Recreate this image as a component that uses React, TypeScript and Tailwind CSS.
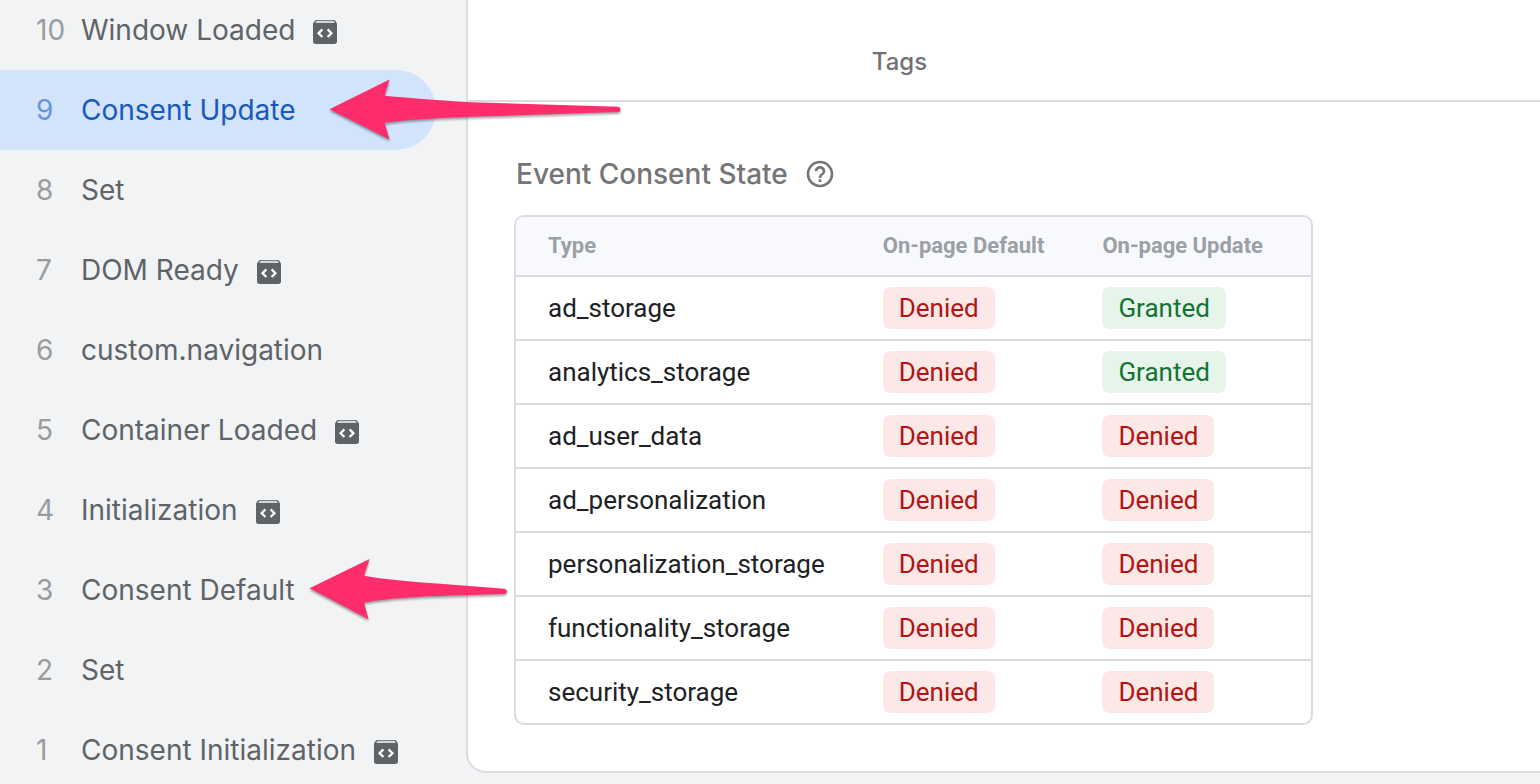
import React from "react";
import { MdHelpOutline } from "react-icons/md";

type EventItem = {
  id: number;
  label: string;
  hasCode?: boolean;
  selected?: boolean;
  arrow?: "update" | "default";
};

const events: EventItem[] = [
  { id: 10, label: "Window Loaded", hasCode: true },
  { id: 9, label: "Consent Update", selected: true, arrow: "update" },
  { id: 8, label: "Set" },
  { id: 7, label: "DOM Ready", hasCode: true },
  { id: 6, label: "custom.navigation" },
  { id: 5, label: "Container Loaded", hasCode: true },
  { id: 4, label: "Initialization", hasCode: true },
  { id: 3, label: "Consent Default", arrow: "default" },
  { id: 2, label: "Set" },
  { id: 1, label: "Consent Initialization", hasCode: true },
];

type Status = "Denied" | "Granted";

const consents: { type: string; initial: Status; update: Status }[] = [
  { type: "ad_storage", initial: "Denied", update: "Granted" },
  { type: "analytics_storage", initial: "Denied", update: "Granted" },
  { type: "ad_user_data", initial: "Denied", update: "Denied" },
  { type: "ad_personalization", initial: "Denied", update: "Denied" },
  { type: "personalization_storage", initial: "Denied", update: "Denied" },
  { type: "functionality_storage", initial: "Denied", update: "Denied" },
  { type: "security_storage", initial: "Denied", update: "Denied" },
];

function CodeBoxIcon() {
  return (
    <svg className="mt-1 h-6 w-6 shrink-0" viewBox="0 0 24 24" aria-hidden="true">
      <path
        d="M3.4 0h17.2q1 0 1.6.8L23.4 2.4Q24 3.2 24 4.2V21.3A2.7 2.7 0 0 1 21.3 24H2.7A2.7 2.7 0 0 1 0 21.3V4.2Q0 3.2.6 2.4L1.8.8Q2.4 0 3.4 0z"
        fill="#5f6368"
      />
      <path d="M3.6.8h16.8l1.5 2.2H2.1z" fill="#d3d6d8" />
      <path
        d="M9.4 9.4 5.6 13.2l3.8 3.8M14.6 9.4l3.8 3.8-3.8 3.8"
        fill="none"
        stroke="#fff"
        strokeWidth="2.3"
      />
    </svg>
  );
}

function Arrow({ kind }: { kind: "update" | "default" }) {
  if (kind === "update") {
    return (
      <svg
        className="pointer-events-none absolute top-0 left-80 h-20 w-80 drop-shadow-[0_2px_1px_rgba(0,0,0,0.35)]"
        viewBox="0 0 320 80"
        aria-hidden="true"
      >
        <path
          d="M9.5 39.2 69.5 9.5 64.7 25.7C90 28 125 31 160 32.5L298 36.8Q300.5 37 300.5 39.5T298 42L160 46.5C125 47.6 92 49 64.7 52.8L69.5 69.5Z"
          fill="#ff2d6c"
        />
      </svg>
    );
  }
  return (
    <svg
      className="pointer-events-none absolute top-0 left-75 h-20 w-55 drop-shadow-[0_2px_1px_rgba(0,0,0,0.35)]"
      viewBox="0 0 220 80"
      aria-hidden="true"
    >
      <path
        d="M9.5 38.2 69.5 9 64.2 25.7C82 29.2 112 31.8 140 33.7L204.5 38.8Q207 39.2 207 41.5T204.5 44L150 45.6C122 46.6 88 48 64.2 52.7L68.5 69.2Z"
        fill="#ff2d6c"
      />
    </svg>
  );
}

function Badge({ status }: { status: Status }) {
  return (
    <span
      className={
        status === "Granted"
          ? "block w-fit rounded-lg bg-[#e6f4ea] px-4 text-[26px] leading-[42px] text-[#137333]"
          : "block w-fit rounded-lg bg-[#fce8e6] px-4 text-[26px] leading-[42px] text-[#b31412]"
      }
    >
      {status}
    </span>
  );
}

function Sidebar() {
  return (
    <nav
      aria-label="Events"
      className="relative z-10 w-[466px] shrink-0 font-['Inter','Noto_Sans',sans-serif] text-[28px]"
    >
      <ul className="-mt-2.5">
        {events.map((e) => (
          <li key={e.id} className="relative pr-[30px]">
            <button
              type="button"
              aria-current={e.selected ? "true" : undefined}
              className={
                e.selected
                  ? "flex h-20 w-full items-center rounded-r-full bg-[#d2e3fc] pl-9 text-left whitespace-nowrap text-[#185abc]"
                  : "flex h-20 w-full items-center pl-9 text-left whitespace-nowrap text-[#5f6368]"
              }
            >
              <span
                className={
                  e.selected
                    ? "w-[45px] shrink-0 text-[#6b94d6]"
                    : "w-[45px] shrink-0 text-[#999c9f]"
                }
              >
                {e.id}
              </span>
              <span className="mr-[18px]">{e.label}</span>
              {e.hasCode && <CodeBoxIcon />}
            </button>
            {e.arrow && <Arrow kind={e.arrow} />}
          </li>
        ))}
      </ul>
    </nav>
  );
}

function ConsentTable() {
  return (
    <div className="w-fit overflow-hidden rounded-[10px] border-2 border-[#dadce0]">
      <table className="border-separate border-spacing-0 text-left whitespace-nowrap">
        <thead>
          <tr className="h-[60px] bg-[#f8f9fc] text-[22px] leading-8 text-[#9aa0a6] [&>th]:border-b-2 [&>th]:border-[#dadce0] [&>th]:font-bold">
            <th scope="col" className="pr-[58px] pl-8">
              Type
            </th>
            <th scope="col" className="pr-[58px]">
              On-page Default
            </th>
            <th scope="col" className="pr-12">
              On-page Update
            </th>
          </tr>
        </thead>
        <tbody className="[&>tr:not(:last-child)>td]:border-b-2 [&>tr:not(:last-child)>td]:border-[#dadce0]">
          {consents.map((c) => (
            <tr key={c.type} className="text-[26px] text-[#202124]">
              <td className="py-2.5 pr-[58px] pl-8">{c.type}</td>
              <td className="py-2.5">
                <Badge status={c.initial} />
              </td>
              <td className="py-2.5">
                <Badge status={c.update} />
              </td>
            </tr>
          ))}
        </tbody>
      </table>
    </div>
  );
}

export default function App() {
  return (
    <div className="flex h-screen items-start overflow-hidden bg-[#f1f3f4] font-['Roboto',sans-serif]">
      <Sidebar />
      <main className="min-w-0 flex-1 rounded-bl-[20px] border-b-2 border-l-2 border-[#dadce0] bg-white">
        <header className="flex h-[102px] items-center justify-center border-b-2 border-[#dadce0] pt-6 pr-[209px] font-['Inter','Noto_Sans',sans-serif]">
          <button type="button" className="text-2xl font-medium text-[#6f7173]">
            Tags
          </button>
        </header>
        <section className="pt-[50px] pb-[46px] pl-[46px]">
          <div className="mb-5 flex h-[43px] items-center gap-4">
            <h2 className="pl-0.5 font-['Inter','Noto_Sans',sans-serif] text-[28px] font-medium text-[#757575]">
              Event Consent State
            </h2>
            <button type="button" aria-label="Help" className="text-[#757575]">
              <MdHelpOutline size={32} />
            </button>
          </div>
          <ConsentTable />
        </section>
      </main>
    </div>
  );
}
